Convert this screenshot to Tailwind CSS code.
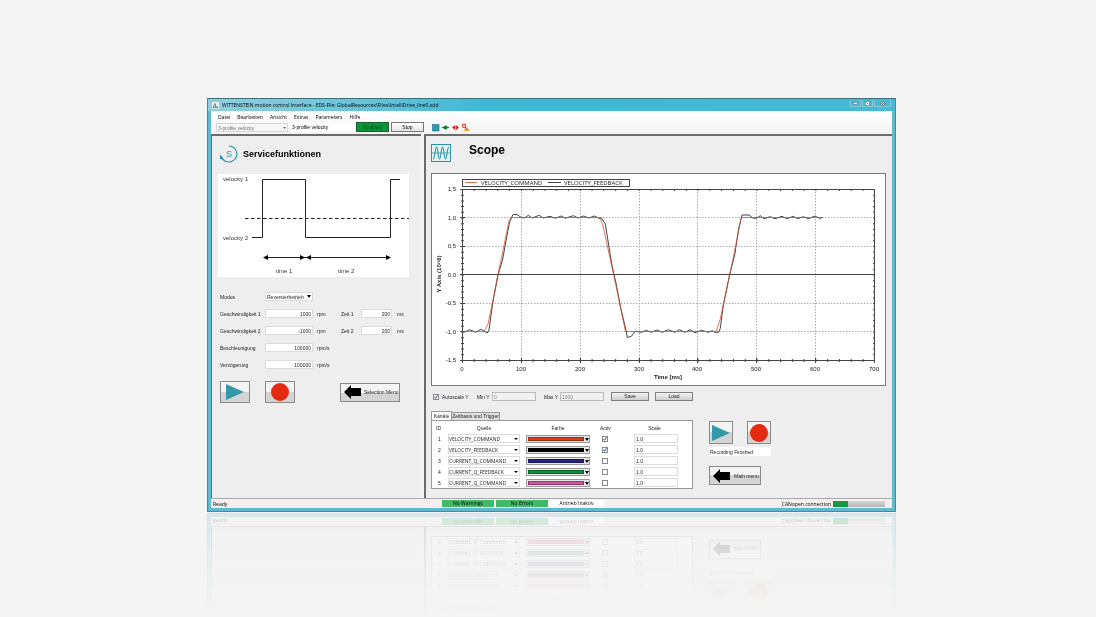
<!DOCTYPE html>
<html lang="de">

<head>
    <meta charset="UTF-8">
    <meta name="viewport" content="width=device-width, initial-scale=1.0">
    <title>WITTENSTEIN motion control Interface</title>
    <script src="https://cdn.jsdelivr.net/npm/@tailwindcss/browser@4"></script>
</head>

<body class="bg-[#f4f4f4] text-black overflow-hidden">
    <main class="min-h-screen pt-[98px] pl-[207px] pr-[200px] font-['Liberation_Sans',sans-serif] text-[5px] leading-[8px]">
        <div
            class="flex flex-col border border-[#3a8fa8] border-t-[#3f6f7a] bg-[#62b8cf] px-[3px] pb-[3px] [-webkit-box-reflect:below_1px_linear-gradient(transparent_72%,rgba(0,0,0,0.03)_82%,rgba(0,0,0,0.19))]">
            <!-- title bar -->
            <header class="flex items-center h-[12px] -mx-[3px] px-1 bg-linear-to-r from-[#8fcfde] via-[#3fb9d5] via-40% to-[#45bad6]">
                <svg class="w-[7px] h-[7px] mr-[3px]" viewBox="0 0 7 7">
                    <rect width="7" height="7" fill="#e8f3f6" />
                    <path d="M1 5.5 3 1.5 4 5.5M4 3.5 6 5.5H1" fill="none" stroke="#456" stroke-width=".7" />
                </svg>
                <h1 class="flex-auto font-['Open_Sans',sans-serif] whitespace-nowrap">WITTENSTEIN motion control Interface - EDS-File: GlobalResources\Files\IntelliDrive_line0.xdd</h1>
                <div class="flex self-start gap-px mt-px">
                    <button aria-label="Minimize" class="w-[11px] h-[7px] border border-t-0 border-[#82c9da] flex items-center justify-center">
                        <svg class="w-[5px] h-[4px]" viewBox="0 0 5 4"><rect x=".5" y="1.5" width="4" height="2" fill="#fff" stroke="#567" stroke-width=".5" /></svg>
                    </button>
                    <button aria-label="Maximize" class="w-[11px] h-[7px] border border-t-0 border-[#82c9da] flex items-center justify-center">
                        <svg class="w-[5px] h-[5px]" viewBox="0 0 5 5"><rect x=".5" y=".5" width="4" height="4" fill="#fff" stroke="#567" stroke-width=".5" /><rect x="2" y="2" width="1" height="1" fill="#567" /></svg>
                    </button>
                    <button aria-label="Close" class="w-[17px] h-[7px] border border-t-0 border-[#82c9da] flex items-center justify-center">
                        <svg class="w-[5px] h-[5px]" viewBox="0 0 5 5"><path d="M.5.5 4.5 4.5M4.5.5.5 4.5" stroke="#567" stroke-width="1.8" /><path d="M.7.7 4.3 4.3M4.3.7.7 4.3" stroke="#fff" stroke-width=".9" /></svg>
                    </button>
                </div>
            </header>

            <!-- menu and toolbar -->
            <div class="bg-linear-to-b from-white to-[#f3f3f3]">
                <nav class="flex items-center gap-[7px] h-[11px] pl-[7px] font-['Open_Sans',sans-serif]">
                    <button>Datei</button>
                    <button>Bearbeiten</button>
                    <button>Ansicht</button>
                    <button>Extras</button>
                    <button>Parameters</button>
                    <button>Hilfe</button>
                </nav>
                <div class="flex items-center h-[12px] pl-[5px] pb-[2px]">
                    <div class="relative">
                        <select aria-label="Profile" class="block appearance-none w-[72px] h-[9px] px-px border border-[#d5d5d5] bg-[#f6f6f6] text-[#777]">
                            <option>3-profile velocity</option>
                        </select>
                        <svg class="absolute right-[2px] top-[4px] w-[3px] h-[2px]" viewBox="0 0 3 2"><path d="M0 0H3L1.5 2Z" fill="#666" /></svg>
                    </div>
                    <input aria-label="Active profile" value="3-profile velocity" class="w-[64px] h-[9px] ml-[3px] px-px bg-white">
                    <button class="w-[33px] h-[10px] ml-px border border-[#17602c] bg-[#0c9338] text-[#0a4d20] leading-[7px]">Enabled</button>
                    <button class="w-[33px] h-[10px] ml-[2px] border border-[#777] bg-linear-to-b from-white to-[#e4e4e4] leading-[7px]">Stop</button>
                    <svg class="w-[38px] h-[9px] ml-[8px]" viewBox="0 0 38 9">
                        <rect x=".5" y="1.5" width="6.5" height="6.5" fill="#2b9bb0" stroke="#27707f" stroke-width=".6" />
                        <path d="M10 4.5H17" stroke="#138a3a" stroke-width="1.2" />
                        <circle cx="13.5" cy="4.5" r="2" fill="#0d7d31" />
                        <path d="M20 4.5 23.300 2V7ZM27 4.500 23.900 2V7Z" fill="#d5281e" />
                        <circle cx="32" cy="2.700" r="1.600" fill="none" stroke="#e0452b" stroke-width="1.200" />
                        <path d="M34 3.500 38 8H32Z" fill="#f0a020" />
                        <path d="M33 4 35 6" stroke="#e0452b" />
                    </svg>
                </div>
            </div>

            <div class="flex h-[364px] gap-[3px] bg-[#f3f3f3]">
                <!-- service functions -->
                <section class="w-[210px] flex-none border-t-2 border-l border-[#6b6b6b] bg-[#eeeeee] pl-[6px] pt-[9px] text-[#222]">
                    <div class="flex items-center gap-[5px] ml-[2px]">
                        <svg class="w-[18px] h-[18px]" viewBox="0 0 18 18">
                            <path d="M9 1A8 8 0 1 1 1.300 11.500" fill="none" stroke="#2b93a6" stroke-width="1.200" />
                            <path d="M0 9.500 4 14.500 0 14Z" fill="#2b93a6" />
                            <text x="9" y="12" text-anchor="middle" font-size="9" fill="#2b93a6">S</text>
                        </svg>
                        <h2 class="font-bold text-[9px] leading-[12px] text-black">Servicefunktionen</h2>
                    </div>
                    <svg class="w-[191px] h-[103px] mt-[11px] bg-white" viewBox="0 0 191 103">
                        <g fill="none" stroke="#222">
                            <path d="M34 63.500H44.500V5.500H87.500V63.500H172.500V5.500H182" />
                            <path d="M27 44.500H191" stroke-dasharray="3.500 2.500" />
                            <path d="M48 83.500H170" />
                        </g>
                        <path d="M45 83.500 50 81V86ZM87 83.500 82 81V86ZM88 83.500 93 81V86ZM173 83.500 168 81V86Z" />
                        <g font-size="6" fill="#333">
                            <text x="5" y="7">velocity 1</text>
                            <text x="5" y="66">velocity 2</text>
                            <text x="58" y="99">time 1</text>
                            <text x="120" y="99">time 2</text>
                        </g>
                    </svg>
                    <form class="grid grid-cols-[45px_49px_27px_20px_36px_1fr] auto-rows-[17px] items-center mt-[11px] pl-[2px]">
                        <label for="modus">Modus</label>
                        <div class="relative col-span-5 w-[48px]">
                            <select id="modus" class="block appearance-none w-full h-[9px] px-px border border-[#dcdcdc] bg-white">
                                <option>Reversierbetrieb</option>
                            </select>
                            <svg class="absolute right-[2px] top-[3px] w-[4px] h-[3px]" viewBox="0 0 4 3"><path d="M0 0H4L2 3Z" /></svg>
                        </div>
                        <label for="v1">Geschwindigkeit 1</label>
                        <input id="v1" value="1000" class="w-[48px] h-[9px] px-px border border-[#dcdcdc] bg-white text-right">
                        <span class="pl-[3px]">rpm</span>
                        <label for="t1">Zeit 1</label>
                        <input id="t1" value="200" class="w-[31px] h-[9px] px-px border border-[#dcdcdc] bg-white text-right">
                        <span>ms</span>
                        <label for="v2">Geschwindigkeit 2</label>
                        <input id="v2" value="-1000" class="w-[48px] h-[9px] px-px border border-[#dcdcdc] bg-white text-right">
                        <span class="pl-[3px]">rpm</span>
                        <label for="t2">Zeit 2</label>
                        <input id="t2" value="200" class="w-[31px] h-[9px] px-px border border-[#dcdcdc] bg-white text-right">
                        <span>ms</span>
                        <label for="acc">Beschleunigung</label>
                        <input id="acc" value="100000" class="w-[48px] h-[9px] px-px border border-[#dcdcdc] bg-white text-right">
                        <span class="col-span-4 pl-[3px]">rpm/s</span>
                        <label for="dec">Verzögerung</label>
                        <input id="dec" value="100000" class="w-[48px] h-[9px] px-px border border-[#dcdcdc] bg-white text-right">
                        <span class="col-span-4 pl-[3px]">rpm/s</span>
                    </form>
                    <div class="flex items-center mt-[8px] pl-[2px]">
                        <button aria-label="Start" class="w-[30px] h-[22px] flex items-center justify-center border border-[#8a8a8a] bg-linear-to-b from-[#f4f4f4] from-50% to-[#d4d4d4] to-50%">
                            <svg class="w-[18px] h-[18px]" viewBox="0 0 18 18"><path d="M0 1 18 9 0 17Z" fill="#3399aa" /></svg>
                        </button>
                        <button aria-label="Stop" class="w-[30px] h-[22px] ml-[15px] flex items-center justify-center border border-[#8a8a8a] bg-linear-to-b from-[#f4f4f4] from-50% to-[#d4d4d4] to-50%">
                            <svg class="w-[18px] h-[18px]" viewBox="0 0 18 18"><circle cx="9" cy="9" r="9" fill="#e52a12" /></svg>
                        </button>
                        <button class="w-[60px] h-[19px] ml-[45px] flex items-center gap-[3px] pl-[3px] whitespace-nowrap border border-[#8a8a8a] bg-linear-to-b from-[#f4f4f4] from-50% to-[#d4d4d4] to-50%">
                            <svg class="w-[17px] h-[14px] flex-none" viewBox="0 0 17 14"><path d="M0 7 7 0V3H17V11H7V14Z" /></svg>
                            Selection Menu
                        </button>
                    </div>
                </section>

                <!-- scope -->
                <section class="flex-auto min-w-0 border-t-2 border-l-2 border-[#6b6b6b] bg-[#eeeeee] pl-[5px] pr-[6px] pt-[8px] text-[#222]">
                    <div class="flex items-start gap-[18px]">
                        <svg class="w-[20px] h-[18px]" viewBox="0 0 20 18">
                            <rect x=".5" y=".5" width="19" height="17" fill="#e4f1f3" stroke="#2b93a6" />
                            <path d="M1 9H19" stroke="#2b93a6" stroke-width=".7" />
                            <path d="M2 15C4 15 4 3 5.500 3S7 15 8.500 15 10 3 11.500 3 13 15 14.500 15 16 3 18 3" fill="none" stroke="#2b93a6" stroke-width="1.100" />
                        </svg>
                        <h2 class="font-bold text-[12px] leading-[13px] text-black">Scope</h2>
                    </div>
                    <svg class="block w-full mt-[11px] bg-white border border-[#777]" viewBox="1 1 453 211">
                        <!-- legend -->
                        <rect x="31.500" y="6.500" width="167" height="7" fill="#fff" stroke="#444" />
                        <path d="M34 9.500H46" stroke="#e8714f" />
                        <path d="M117 9.500H130" stroke="#444" />
                        <g font-size="6" fill="#222" font-family="Open Sans">
                            <text x="50" y="12">VELOCITY_COMMAND</text>
                            <text x="133" y="12">VELOCITY_FEEDBACK</text>
                        </g>
                        <!-- grid -->
                        <g stroke="#aaa" stroke-dasharray="1.500 1.500">
                            <path d="M90.500 16V187M149.500 16V187M208.500 16V187M266.500 16V187M325.500 16V187M384.500 16V187" />
                            <path d="M31 44.500H443M31 73.500H443M31 130.500H443M31 158.500H443" />
                        </g>
                        <!-- frame, minor and major ticks -->
                        <g fill="none" stroke="#444">
                            <rect x="31.500" y="16.500" width="412" height="171" />
                            <path d="M31 101.500H443" />
                            <path d="M31 187.500H444" stroke-width="3" stroke-dasharray="1 10.780" />
                            <path d="M31 17H444" stroke-width="2" stroke-dasharray="1 10.780" />
                            <path d="M31.500 16V188" stroke-width="3" stroke-dasharray="1 4.700" />
                            <path d="M443 16V188" stroke-width="2" stroke-dasharray="1 4.700" />
                            <path d="M31.500 185V190M90.500 185V190M149.500 185V190M208.500 185V190M266.500 185V190M325.500 185V190M384.500 185V190M443.500 185V190" />
                            <path d="M29 16.500H34M29 44.500H34M29 73.500H34M29 101.500H34M29 130.500H34M29 158.500H34M29 187.500H34" />
                        </g>
                        <!-- curves -->
                        <path fill="none" stroke="#444" stroke-linejoin="round"
                            d="M31 158.500 34 159 38.700 156.700 44.700 159.300 50 156.300 56.300 160 58 157 61.700 130 67 102 71.500 87 78.500 49 82 41.500H86L90.300 44.500 93.700 45 97.300 42.300 101 45 108.300 42.300 112.300 45 119 43.300 124.300 45.300 130.300 43 134.300 45.300 142.300 42.700 147 45 152.700 43 157.700 45 163.700 43 167.700 45.300 170.700 45.300 174.300 51 180.700 91 183 101.700 185 110 189.700 135 195.300 158.700 196.300 164.500 200.300 163.300 204.300 158.300 210.700 159.300 215.300 157.300 220.300 159.300 226 157 231.300 159.300 237.300 156.700 244 159.300 248.300 156.700 254 159.300 259 156.700 264 159.700 270.700 157.300 277.300 159.300 281.300 157.700 284 159.300H287.700L289.300 155.300 292.300 132 298.700 101.300 303.700 82 307.700 55.300 311 42H318L321.700 45 325.700 45.300 329.300 42.700 333 45.700 339 43.700 344 45.700 351 43.300 355.700 45.700 362.300 43.300 366.700 45.700 372.300 43.700 377.300 45.700 384 43 388.300 45.300 391.700 44.500" />
                        <path fill="none" stroke="#e04a22" stroke-opacity=".75" stroke-linejoin="round"
                            d="M31 158.500H53L57 151 62 127 67 101 70 87 78 48 80 44.500H169L172 53 182.500 101 194.500 158.500H285L289 147 299 101 310 46 311 44.500H391.700" />
                        <g font-size="6" fill="#222" text-anchor="end">
                            <text x="25" y="18">1,5</text>
                            <text x="25" y="47">1,0</text>
                            <text x="25" y="75">0,5</text>
                            <text x="25" y="104">0,0</text>
                            <text x="25" y="132">-0,5</text>
                            <text x="25" y="161">-1,0</text>
                            <text x="25" y="189">-1,5</text>
                        </g>
                        <g font-size="6" fill="#222" text-anchor="middle">
                            <text x="31" y="198">0</text>
                            <text x="90" y="198">100</text>
                            <text x="149" y="198">200</text>
                            <text x="208" y="198">300</text>
                            <text x="266" y="198">400</text>
                            <text x="325" y="198">500</text>
                            <text x="384" y="198">600</text>
                            <text x="443" y="198">700</text>
                            <text x="237" y="206" font-weight="bold">Time [ms]</text>
                            <text transform="translate(10 101) rotate(-90)" font-weight="bold">Y Axis (10^6)</text>
                        </g>
                    </svg>

                    <div class="flex items-center mt-[6px] pl-[2px]">
                        <input id="auto" type="checkbox" checked class="sr-only">
                        <label for="auto" class="flex items-center gap-[3px] w-[44px]">
                            <svg class="w-[6px] h-[6px]" viewBox="0 0 6 6"><rect x=".5" y=".5" width="5" height="5" fill="#fff" stroke="#888" /><path d="M1.500 3 2.600 4.300 4.500 1.300" fill="none" stroke="#1c4f8f" /></svg>
                            Autoscale Y
                        </label>
                        <label for="miny" class="w-[15px]">Min Y</label>
                        <input id="miny" value="0" class="w-[44px] h-[9px] px-px border border-[#bbb] bg-[#f1f1f1] text-[#888]">
                        <label for="maxy" class="w-[16px] ml-[8px]">Max Y</label>
                        <input id="maxy" value="1000" class="w-[44px] h-[9px] px-px border border-[#bbb] bg-[#f1f1f1] text-[#888]">
                        <button class="w-[38px] h-[9px] ml-[7px] border border-[#808080] bg-linear-to-b from-[#f4f4f4] to-[#cfcfcf] leading-[7px]">Save</button>
                        <button class="w-[38px] h-[9px] ml-[6px] border border-[#808080] bg-linear-to-b from-[#f4f4f4] to-[#cfcfcf] leading-[7px]">Load</button>
                    </div>

                    <div class="flex mt-[10px]">
                        <div class="w-[262px]">
                            <div class="flex items-end">
                                <button class="w-[21px] h-[9px] border border-b-0 border-[#999] bg-white leading-[7px]">Kanäle</button>
                                <button class="w-[48px] h-[8px] border border-b-0 border-l-0 border-[#999] bg-[#e2e2e2] leading-[7px] whitespace-nowrap">Zeitbasis und Trigger</button>
                            </div>
                            <div class="h-[69px] border border-[#999] bg-white pt-px pl-[4px]">
                                <table class="table-fixed w-[242px]">
                                    <thead>
                                        <tr class="h-[11px]">
                                            <th class="w-[12px] p-0 font-normal text-left">ID</th>
                                            <th class="w-[78px] p-0 pr-[6px] font-normal">Quelle</th>
                                            <th class="w-[70px] p-0 pr-[6px] font-normal">Farbe</th>
                                            <th class="w-[38px] p-0 font-normal text-left pl-[4px]">Activ</th>
                                            <th class="w-[44px] p-0 pr-[3px] font-normal">Scale</th>
                                        </tr>
                                    </thead>
                                    <tbody id="channels"></tbody>
                                </table>
                            </div>
                        </div>
                        <div class="pl-[16px] pt-[10px]">
                            <div class="flex gap-[14px]">
                                <button aria-label="Start recording" class="w-[24px] h-[23px] flex items-center justify-center border border-[#8a8a8a] bg-linear-to-b from-[#f4f4f4] from-50% to-[#d4d4d4] to-50%">
                                    <svg class="w-[18px] h-[18px]" viewBox="0 0 18 18"><path d="M0 1 18 9 0 17Z" fill="#3399aa" /></svg>
                                </button>
                                <button aria-label="Stop recording" class="w-[24px] h-[23px] flex items-center justify-center border border-[#8a8a8a] bg-linear-to-b from-[#f4f4f4] from-50% to-[#d4d4d4] to-50%">
                                    <svg class="w-[18px] h-[18px]" viewBox="0 0 18 18"><circle cx="9" cy="9" r="9" fill="#e52a12" /></svg>
                                </button>
                            </div>
                            <input aria-label="Recording state" value="Recording Finished" class="block w-[62px] h-[9px] mt-[3px] px-px bg-white">
                            <button class="w-[52px] h-[19px] mt-[10px] flex items-center gap-[4px] pl-[3px] whitespace-nowrap border border-[#8a8a8a] bg-linear-to-b from-[#f4f4f4] from-50% to-[#d4d4d4] to-50%">
                                <svg class="w-[17px] h-[14px] flex-none" viewBox="0 0 17 14"><path d="M0 7 7 0V3H17V11H7V14Z" /></svg>
                                Main menu
                            </button>
                        </div>
                    </div>
                </section>
            </div>

            <!-- status bar -->
            <footer class="flex items-center h-[10px] border-t border-[#aaa] bg-[#f5efef] pl-[2px] pr-[2px] font-['Open_Sans',sans-serif]">
                <span class="w-[229px]">Ready</span>
                <span class="w-[52px] h-[7px] bg-[#43b867] text-center leading-[7px]">No Warnings</span>
                <span class="w-[52px] h-[7px] ml-[2px] bg-[#43b867] text-center leading-[7px]">No Errors</span>
                <span class="w-[55px] h-[7px] ml-px bg-white text-center leading-[7px]">Antrieb Inaktiv</span>
                <label id="can" class="ml-auto mr-[2px]">CANopen connection</label>
                <div role="progressbar" aria-labelledby="can" aria-valuenow="28" class="w-[52px] h-[6px] mr-[5px] bg-linear-to-b from-[#d8d8d8] to-[#b4b4b4]">
                    <div class="h-full bg-[#0f9c40]" style="width: 28%"></div>
                </div>
            </footer>
        </div>
    </main>

    <script>
        const channels = [
            ['VELOCITY_COMMAND', '#d8401c', true],
            ['VELOCITY_FEEDBACK', '#000000', true],
            ['CURRENT_Q_COMMAND', '#2a2382', false],
            ['CURRENT_Q_FEEDBACK', '#0f8a3c', false],
            ['CURRENT_Q_COMMAND', '#d0569f', false],
        ]
        document.getElementById('channels').innerHTML = channels.map(([name, color, on], i) => `
            <tr class="h-[11px]">
                <td class="p-0 pl-[2px]">${i + 1}</td>
                <td class="p-0">
                    <div class="relative w-[72px]">
                        <select aria-label="Quelle ${i + 1}" class="block appearance-none w-full h-[9px] border border-[#dcdcdc] bg-white font-['Open_Sans',sans-serif]"><option>${name}</option></select>
                        <svg class="absolute right-[2px] top-[4px] w-[4px] h-[2px]" viewBox="0 0 4 2"><path d="M0 0H4L2 2Z" /></svg>
                    </div>
                </td>
                <td class="p-0">
                    <div class="relative w-[64px]">
                        <select aria-label="Farbe ${i + 1}" class="block appearance-none w-full h-[8px] border border-[#999] bg-[#e8e8e8]"><option></option></select>
                        <span class="absolute left-[2px] top-[2px] w-[56px] h-[4px] border border-black/30 pointer-events-none" style="background: ${color}"></span>
                        <svg class="absolute right-[1px] top-[3px] w-[4px] h-[3px]" viewBox="0 0 4 3"><path d="M0 0H4L2 3Z" /></svg>
                    </div>
                </td>
                <td class="p-0 pl-[6px]">
                    <input id="act${i}" type="checkbox" aria-label="Activ ${i + 1}" ${on ? 'checked' : ''} class="sr-only">
                    <label for="act${i}" class="block w-[6px]">
                        <svg class="w-[6px] h-[6px]" viewBox="0 0 6 6"><rect x=".5" y=".5" width="5" height="5" fill="#fff" stroke="#888" />${on ? '<path d="M1.500 3 2.600 4.300 4.500 1.300" fill="none" stroke="#1c4f8f" />' : ''}</svg>
                    </label>
                </td>
                <td class="p-0"><input aria-label="Scale ${i + 1}" value="1.0" class="block w-[44px] h-[9px] px-px border border-[#dcdcdc] bg-white"></td>
            </tr>`).join('')
    </script>
</body>

</html>
